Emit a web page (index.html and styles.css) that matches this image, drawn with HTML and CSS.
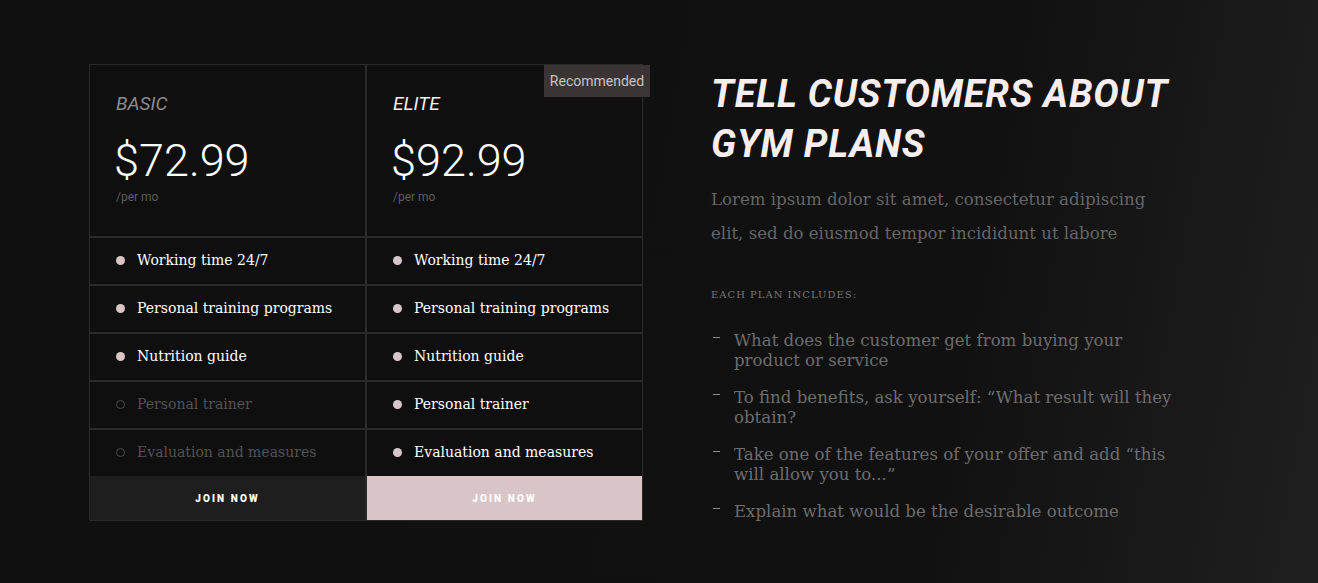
FILE: index.html
```html
<!DOCTYPE html>
<html lang="en">
<head>
<meta charset="utf-8">
<title>Gym Plans</title>
<link rel="stylesheet" href="styles.css">
</head>
<body>
<main class="section">
  <div class="plans">
    <div class="plan">
      <div class="plan-head">
        <div class="plan-name muted">BASIC</div>
        <div class="plan-price">$72.99</div>
        <div class="plan-per">/per mo</div>
      </div>
      <ul class="features">
        <li class="feature"><span class="dot"></span>Working time 24/7</li>
        <li class="feature"><span class="dot"></span>Personal training programs</li>
        <li class="feature"><span class="dot"></span>Nutrition guide</li>
        <li class="feature off"><span class="dot"></span>Personal trainer</li>
        <li class="feature off"><span class="dot"></span>Evaluation and measures</li>
      </ul>
      <a class="join" href="#">JOIN NOW</a>
    </div>
    <div class="plan">
      <span class="badge">Recommended</span>
      <div class="plan-head">
        <div class="plan-name">ELITE</div>
        <div class="plan-price">$92.99</div>
        <div class="plan-per">/per mo</div>
      </div>
      <ul class="features">
        <li class="feature"><span class="dot"></span>Working time 24/7</li>
        <li class="feature"><span class="dot"></span>Personal training programs</li>
        <li class="feature"><span class="dot"></span>Nutrition guide</li>
        <li class="feature"><span class="dot"></span>Personal trainer</li>
        <li class="feature"><span class="dot"></span>Evaluation and measures</li>
      </ul>
      <a class="join join-accent" href="#">JOIN NOW</a>
    </div>
  </div>
  <div class="info">
    <h1 class="title">TELL CUSTOMERS ABOUT GYM PLANS</h1>
    <p class="lead">Lorem ipsum dolor sit amet, consectetur adipiscing elit, sed do eiusmod tempor incididunt ut labore</p>
    <div class="includes">EACH PLAN INCLUDES:</div>
    <ul class="benefits">
      <li>What does the customer get from buying your product or service</li>
      <li>To find benefits, ask yourself: “What result will they obtain?</li>
      <li>Take one of the features of your offer and add “this will allow you to...”</li>
      <li>Explain what would be the desirable outcome</li>
    </ul>
  </div>
</main>
</body>
</html>
```
FILE: styles.css
```css
* { box-sizing: border-box; }
html, body { margin: 0; height: 100%; }
body {
  background: linear-gradient(100deg, #101010 0%, #111111 72%, #1f1f1f 100%);
  font-family: "DejaVu Serif", serif;
  color: #fff;
}
.section {
  display: flex;
  align-items: flex-start;
  padding: 64px 0 0 89px;
  gap: 68px;
}
.plans {
  display: flex;
  width: 554px;
}
.plan {
  position: relative;
  width: 277px;
  border: 1px solid #2a2a2a;
  background: #0f0f0f;
  display: flex;
  flex-direction: column;
}
.plan-head {
  height: 171px;
  padding: 27px 0 0 26px;
  font-family: Roboto, sans-serif;
}
.plan-name {
  font-size: 19px;
  font-style: italic;
  line-height: 24px;
  color: #f4eef0;
}
.plan-name.muted { color: #8c8c8c; }
.plan-price {
  font-size: 45px;
  font-weight: 300;
  line-height: 52px;
  margin-top: 19px;
  margin-left: -2px;
  color: #fff;
}
.plan-per {
  font-size: 12px;
  color: #5e5e5e;
  margin-top: 3px;
}
.features {
  list-style: none;
  margin: 0;
  padding: 0;
}
.feature {
  display: flex;
  align-items: center;
  height: 48px;
  border-top: 2px solid #2a2a2a;
  padding: 0 0 2px 26px;
  font-size: 14px;
  color: #fff;
}
.dot {
  width: 9px;
  height: 9px;
  border-radius: 50%;
  background: #d9c5c7;
  margin-right: 12px;
  flex: none;
}
.feature.off { color: #535353; }
.feature.off .dot {
  background: transparent;
  border: 1px solid #4a4a4a;
}
.join {
  display: flex;
  align-items: center;
  justify-content: center;
  height: 44px;
  background: #1e1e1e;
  color: #fff;
  font-family: Roboto, sans-serif;
  font-weight: 900;
  font-size: 10px;
  letter-spacing: 2.1px;
  text-decoration: none;
}
.join-accent { background: #d9c5c7; }
.badge {
  position: absolute;
  top: 0;
  right: -8px;
  width: 106px;
  height: 32px;
  display: flex;
  align-items: center;
  justify-content: center;
  background: rgba(62, 55, 55, 0.92);
  color: #c9c2c2;
  font-family: Roboto, sans-serif;
  font-size: 14px;
}
.info {
  width: 490px;
}
.title {
  margin: 5px 0 0;
  width: 480px;
  font-family: Roboto, sans-serif;
  font-weight: 700;
  font-style: italic;
  font-size: 38px;
  line-height: 50px;
  letter-spacing: 0.8px;
  color: #f8eef0;
}
.lead {
  margin: 14px 0 0;
  width: 465px;
  font-size: 16.6px;
  line-height: 34px;
  color: #666;
}
.includes {
  margin-top: 38px;
  font-size: 10px;
  letter-spacing: 1px;
  color: #777;
}
.benefits {
  list-style: none;
  margin: 31px 0 0;
  padding: 0;
  width: 472px;
}
.benefits li {
  position: relative;
  padding-left: 23px;
  font-size: 16.6px;
  line-height: 20px;
  color: #6d6d6d;
  margin-bottom: 17px;
}
.benefits li::before {
  content: "";
  position: absolute;
  left: 2px;
  top: 6px;
  width: 7px;
  height: 1px;
  background: #8a8a8a;
}
```
